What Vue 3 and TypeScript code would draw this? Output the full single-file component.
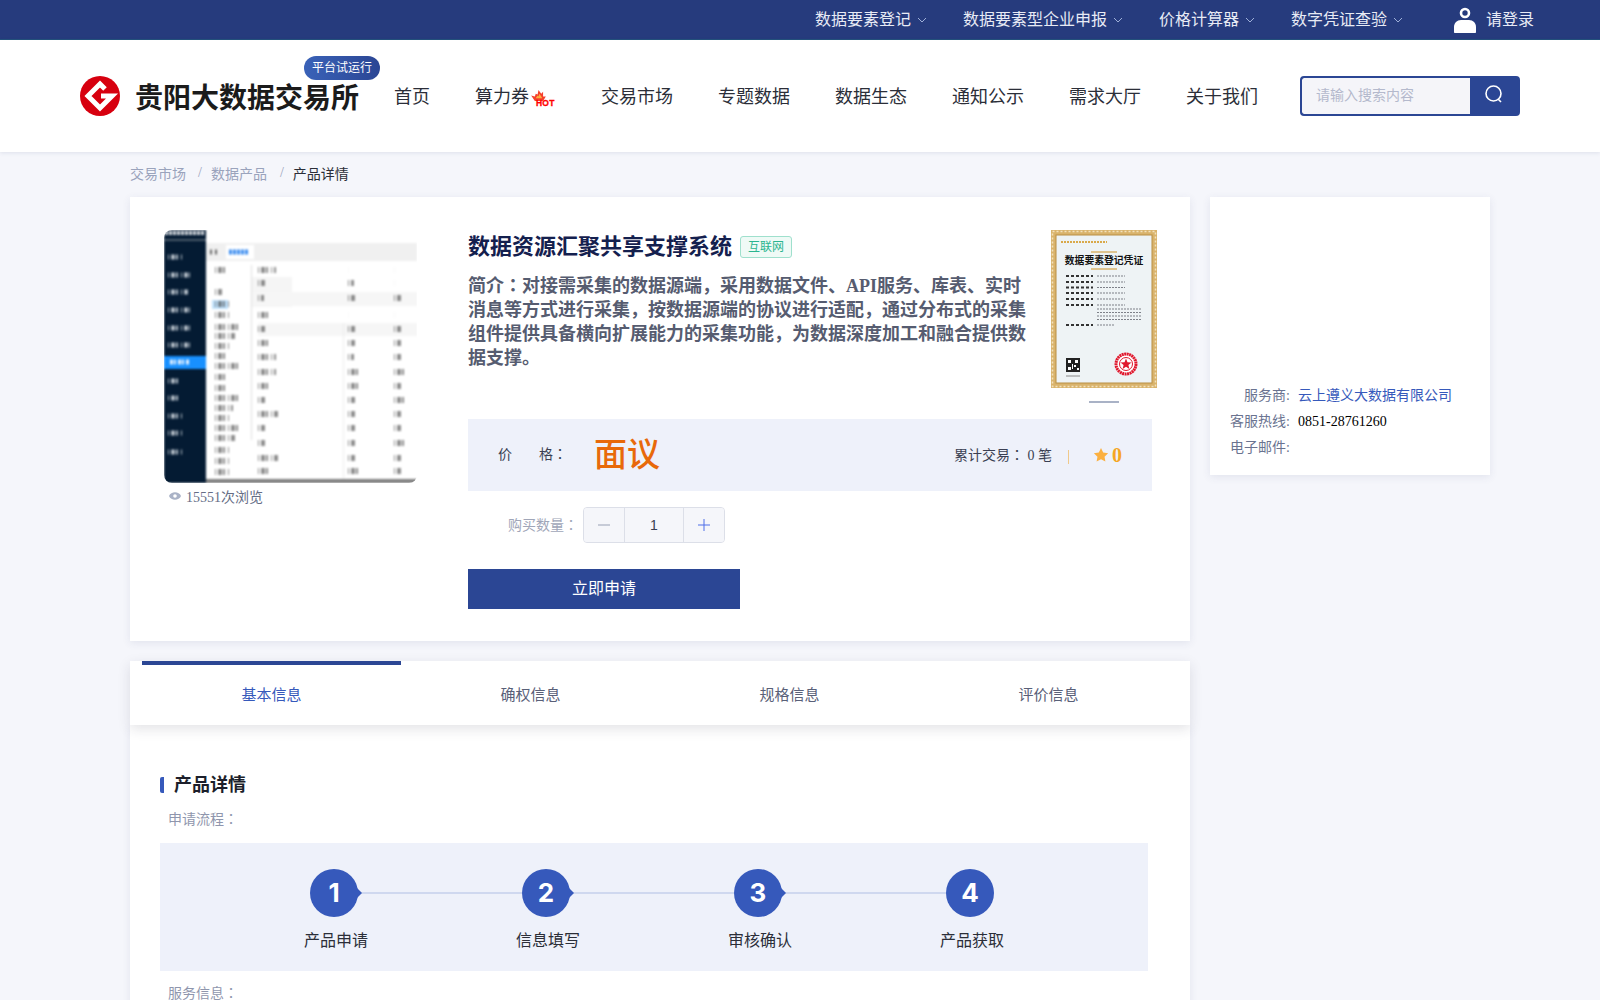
<script setup lang="ts">
import { ref } from 'vue';

const topLinks = ['数据要素登记', '数据要素型企业申报', '价格计算器', '数字凭证查验'];
const navItems = ['首页', '算力券', '交易市场', '专题数据', '数据生态', '通知公示', '需求大厅', '关于我们'];
const tabs = ['基本信息', '确权信息', '规格信息', '评价信息'];
const steps = ['产品申请', '信息填写', '审核确认', '产品获取'];

const activeTab = ref(0);
const amount = ref(1);

const sideRows = [
  { label: '服务商:', value: '云上遵义大数据有限公司', link: true },
  { label: '客服热线:', value: '0851-28761260', link: false },
  { label: '电子邮件:', value: '', link: false }
];

// blurred thumbnail: rows are [y, width], drawn as dashed strokes so they read like tiny text
const menuRows = [[27, 14], [45, 22], [62, 20], [80, 22], [98, 22], [115, 22], [151, 10], [168, 12], [186, 14], [203, 14], [222, 14]];
const treeRows = [[40, 12], [62, 8], [74, 14], [85, 14], [97, 24], [106, 20], [116, 14], [126, 10], [136, 24], [147, 10], [158, 10], [168, 26], [178, 18], [188, 16], [198, 26], [208, 20], [220, 14], [231, 14], [242, 14]];
const tableRows = [[40, 18, 0, 0], [53, 8, 6, 0], [68, 6, 8, 8], [85, 10, 0, 0], [99, 8, 8, 8], [113, 12, 8, 8], [127, 18, 6, 8], [142, 18, 10, 10], [156, 10, 12, 8], [170, 8, 8, 10], [184, 20, 8, 8], [198, 8, 8, 8], [213, 8, 8, 10], [228, 20, 8, 8], [241, 12, 10, 8]];
const certRows = [46, 52, 57.5, 63, 69, 75];
const certText = [79, 82.5, 86, 89.5];
</script>

<template>
  <div class="page">
    <div class="topbar">
      <a v-for="link in topLinks" :key="link" class="top-link">
        {{ link }}
        <svg class="chev" width="10" height="6" viewBox="0 0 10 6"><path d="M1 1l4 4 4-4" fill="none" stroke="#9fb0d8" stroke-width="1" /></svg>
      </a>
      <a class="login">
        <svg width="24" height="26" viewBox="0 0 24 26">
          <circle cx="12" cy="6" r="4" fill="none" stroke="#fff" stroke-width="2.6" />
          <path d="M1 25v-5c0-4 3-7 7-7h8c4 0 7 3 7 7v5c0 .6-.4 1-1 1H2c-.6 0-1-.4-1-1z" fill="#fff" />
        </svg>
        <span>请登录</span>
      </a>
    </div>

    <header class="header">
      <div class="brand">
        <svg class="logo" width="40" height="40" viewBox="0 0 40 40">
          <circle cx="20" cy="20" r="20" fill="#d7000f" />
          <path d="M25 13L20 8 8 20l12 12 12-12H21" fill="none" stroke="#fff" stroke-width="5" />
        </svg>
        <span class="brand-name">贵阳大数据交易所</span>
        <span class="trial">平台试运行</span>
      </div>
      <nav class="nav">
        <a v-for="item in navItems" :key="item" class="nav-item">
          {{ item }}
          <span v-if="item === '算力券'" class="hot">
            <svg width="15" height="11" viewBox="0 0 16 12">
              <path d="M0 6l4 1 1-3 2 1 1-5 3 4 2-2 0 5 3 0-3 5H4z" fill="#f5402c" />
              <path d="M5 9l2-3 1 1 1-3 2 3 1 2z" fill="#fbb040" />
            </svg>
            <b>HOT</b>
          </span>
        </a>
      </nav>
      <div class="search">
        <input class="search-input" placeholder="请输入搜索内容" />
        <button class="search-btn" aria-label="搜索">
          <svg width="20" height="20" viewBox="0 0 20 20"><circle cx="9.5" cy="9.5" r="7.5" fill="none" stroke="#fff" stroke-width="1.6" /><path d="M14 15l3 3" stroke="#fff" stroke-width="1.6" /></svg>
        </button>
      </div>
    </header>

    <div class="crumbs">
      <span>交易市场</span><i>/</i><span>数据产品</span><i>/</i><span class="current">产品详情</span>
    </div>

    <div class="content">
      <div class="left-col">
        <section class="card product">
          <div class="gallery">
            <div class="thumb">
              <svg width="253" height="253" viewBox="0 0 253 253" class="thumb-art">
                <rect width="253" height="253" fill="#fff" />
                <rect width="42" height="253" fill="#041b33" />
                <rect y="126" width="42" height="13" fill="#1890ff" />
                <rect y="9" width="42" height="2" fill="#4a5a6a" />
                <line x1="1" y1="3" x2="40" y2="3" stroke="#d8dce2" stroke-width="4" stroke-dasharray="3 1" />
                <line x1="6" y1="132" x2="26" y2="132" stroke="#e8f3ff" stroke-width="5" stroke-dasharray="3 1 2 2" />
                <rect x="42" y="13" width="211" height="18" fill="#f0f0f0" />
                <rect x="62" y="15" width="28" height="14" fill="#fff" />
                <line x1="65" y1="22" x2="84" y2="22" stroke="#3a8cf0" stroke-width="5" stroke-dasharray="3 1" />
                <line x1="46" y1="22" x2="56" y2="22" stroke="#666" stroke-width="5" stroke-dasharray="2 3" />
                <rect x="48" y="70" width="16" height="9" fill="#bfe0fb" />
                <rect x="88" y="47" width="40" height="30" fill="#f5f5f5" />
                <rect x="88" y="62" width="165" height="14" fill="#f6f6f6" />
                <rect x="94" y="93" width="159" height="13" fill="#f6f6f6" />
                <rect x="87" y="35" width="1" height="175" fill="#dfdfdf" />
                <rect x="179" y="93" width="1" height="160" fill="#ececec" />
                <rect x="42" y="249" width="211" height="4" fill="#7f7f7f" />
                <g stroke="#cfd6de" stroke-width="5" stroke-dasharray="1 2 4 1 2 3" opacity=".85">
                  <line v-for="r in menuRows" :key="r[0]" x1="4" :y1="r[0]" :x2="4 + r[1]" :y2="r[0]" />
                </g>
                <g stroke="#444" stroke-width="6" stroke-dasharray="1 2 4 1 2 3" opacity=".6">
                  <line v-for="r in treeRows" :key="r[0]" x1="51" :y1="r[0]" :x2="51 + r[1]" :y2="r[0]" />
                  <template v-for="r in tableRows" :key="r[0]">
                    <line x1="94" :y1="r[0]" :x2="94 + r[1]" :y2="r[0]" />
                    <line x1="184" :y1="r[0]" :x2="184 + r[2]" :y2="r[0]" />
                    <line x1="230" :y1="r[0]" :x2="230 + r[3]" :y2="r[0]" />
                  </template>
                </g>
              </svg>
            </div>
            <div class="views">
              <svg width="12" height="8" viewBox="0 0 12 8"><path d="M0 4c2-5 10-5 12 0-2 5-10 5-12 0z" fill="#a9b2c6" /><circle cx="6" cy="4" r="1.8" fill="#fff" /></svg>
              <span>15551次浏览</span>
            </div>
          </div>

          <div class="info">
            <div class="info-top">
              <div class="info-text">
                <div class="title-row">
                  <h1>数据资源汇聚共享支撑系统</h1>
                  <span class="tag">互联网</span>
                </div>
                <p class="intro">简介<span class="colon">：</span>对接需采集的数据源端，采用数据文件、API服务、库表、实时消息等方式进行采集，按数据源端的协议进行适配，通过分布式的采集组件提供具备横向扩展能力的采集功能，为数据深度加工和融合提供数据支撑。</p>
              </div>
              <div class="cert-wrap">
                <svg class="cert" width="106" height="158" viewBox="0 0 106 158">
                  <rect width="106" height="158" fill="#d9b36c" />
                  <rect x="1.5" y="1.5" width="103" height="155" fill="none" stroke="#f3e2bd" stroke-width="1.5" stroke-dasharray="2 2" />
                  <rect x="5" y="5" width="96" height="148" fill="#eef3f5" stroke="#b98f45" stroke-width="1" />
                  <line x1="10" y1="12" x2="56" y2="12" stroke="#d9a94a" stroke-width="2" stroke-dasharray="2 1" />
                  <line x1="40" y1="22" x2="66" y2="22" stroke="#d9b36c" stroke-width="1.5" />
                  <text x="53" y="34" class="cert-title" text-anchor="middle">数据要素登记凭证</text>
                  <line x1="40" y1="39" x2="66" y2="39" stroke="#d9b36c" stroke-width="1.5" />
                  <g stroke="#333" stroke-width="2" stroke-dasharray="3 2">
                    <line v-for="y in certRows" :key="y" x1="15" :y1="y" x2="42" :y2="y" />
                    <line x1="15" y1="95" x2="42" y2="95" />
                  </g>
                  <g stroke="#7d8088" stroke-width="1.2" stroke-dasharray="2 1">
                    <line v-for="y in certRows" :key="'v' + y" x1="46" :y1="y" x2="74" :y2="y" />
                    <line v-for="y in certText" :key="'t' + y" x1="46" :y1="y" x2="90" :y2="y" />
                    <line x1="46" y1="95" x2="64" y2="95" />
                  </g>
                  <rect x="15" y="128" width="14" height="14" fill="#222" />
                  <g fill="#fff">
                    <rect x="17" y="130" width="3" height="3" />
                    <rect x="24" y="130" width="3" height="3" />
                    <rect x="17" y="137" width="3" height="3" />
                    <rect x="23" y="135" width="2" height="2" />
                    <rect x="26" y="138" width="2" height="2" />
                    <rect x="21" y="134" width="1" height="5" />
                  </g>
                  <line x1="15" y1="146" x2="29" y2="146" stroke="#888" stroke-width="1" />
                  <circle cx="75" cy="134" r="10" fill="#fff" stroke="#e0182d" stroke-width="3" stroke-dasharray="2 .5" />
                  <circle cx="75" cy="134" r="6.5" fill="none" stroke="#e0182d" stroke-width="1" />
                  <path d="M75 128.5l1.500 3.800 4 .2-3.100 2.500 1 3.900-3.400-2.200-3.400 2.200 1-3.900-3.100-2.500 4-.2z" fill="#e0182d" />
                </svg>
                <div class="cert-dash"></div>
              </div>
            </div>

            <div class="price-band">
              <span class="price-label"><span>价</span><span>格<span class="colon">：</span></span></span>
              <span class="price">面议</span>
              <span class="deals">累计交易<span class="colon">：</span> 0 笔</span>
              <span class="divider"></span>
              <svg width="16" height="16" viewBox="0 0 24 24"><path d="M12 1.5l3.300 6.800 7.400 1-5.400 5.200 1.300 7.400L12 18.400l-6.600 3.500 1.300-7.400L1.300 9.300l7.400-1z" fill="#fbb040" /></svg>
              <span class="score">0</span>
            </div>

            <div class="qty-row">
              <span class="qty-label">购买数量<span class="colon">：</span></span>
              <div class="stepper">
                <button class="step minus" aria-label="减少">
                  <svg width="12" height="12" viewBox="0 0 12 12"><path d="M0 6h12" stroke="#98a0b4" stroke-width="1" /></svg>
                </button>
                <span class="qty">{{ amount }}</span>
                <button class="step plus" aria-label="增加" @click="amount++">
                  <svg width="12" height="12" viewBox="0 0 12 12"><path d="M0 6h12M6 0v12" stroke="#4f6fe8" stroke-width="1" /></svg>
                </button>
              </div>
            </div>

            <button class="apply">立即申请</button>
          </div>
        </section>

        <div class="tabs">
          <div
            v-for="(tab, i) in tabs"
            :key="tab"
            class="tab"
            :class="{ active: activeTab === i }"
            @click="activeTab = i"
          >{{ tab }}</div>
        </div>

        <section class="card detail">
          <h2>产品详情</h2>
          <div class="sub-label">申请流程<span class="colon">：</span></div>
          <div class="flow">
            <div v-for="(step, i) in steps" :key="step" class="flow-step">
              <div class="flow-circle">{{ i + 1 }}</div>
              <div class="flow-name">{{ step }}</div>
            </div>
          </div>
          <div class="sub-label service">服务信息<span class="colon">：</span></div>
        </section>
      </div>

      <aside class="side card">
        <div v-for="row in sideRows" :key="row.label" class="side-row">
          <span class="side-label">{{ row.label }}</span>
          <span class="side-value" :class="{ link: row.link }">{{ row.value }}</span>
        </div>
      </aside>
    </div>
  </div>
</template>

<style>
html,
body {
  margin: 0;
  background: #f5f6fb;
  overflow: hidden;
}
</style>

<style scoped>
.page {
  height: 1000px;
  overflow: hidden;
  font-family: "Liberation Serif", "Noto Sans CJK SC", serif;
  color: #1c1f2b;
}

/* the reference sets its colons in the middle of the em box */
.colon {
  font-family: "Noto Sans CJK TC", sans-serif;
  line-height: 0;
}

.topbar {
  height: 39px;
  background: #263b7d;
  border-bottom: 1px solid #23527c;
  display: flex;
  justify-content: flex-end;
  align-items: center;
  padding-right: 66px;
  font-size: 16px;
  line-height: 20px;
}

.top-link {
  margin-right: 36px;
  color: #e8ebf5;
  display: flex;
  align-items: center;
  gap: 6px;
}

.login {
  display: flex;
  align-items: center;
  gap: 9px;
  margin-left: 14px;
  color: #e8ebf5;
}

.header {
  height: 112px;
  background: #fff;
  box-shadow: 0 1px 4px rgba(60, 70, 120, 0.12);
  display: flex;
  align-items: center;
  padding-left: 80px;
  position: relative;
}

.brand {
  display: flex;
  align-items: center;
  position: relative;
  width: 314px;
}

.brand-name {
  font-size: 28px;
  font-weight: 700;
  margin-left: 15px;
  white-space: nowrap;
  color: #1b1b1b;
}

.trial {
  position: absolute;
  left: 224px;
  top: -20px;
  height: 24px;
  line-height: 24px;
  padding: 0 8px;
  border-radius: 12px;
  background: linear-gradient(90deg, #3a62b8, #2b4694);
  color: #fff;
  font-size: 12px;
  white-space: nowrap;
}

.nav {
  display: flex;
  gap: 45px;
  font-size: 18px;
  line-height: 24px;
  color: #2b2e38;
  padding-top: 2px;
}

.nav-item {
  position: relative;
  white-space: nowrap;
}

.nav-item:nth-child(2) {
  padding-right: 27px;
}

.hot {
  position: absolute;
  left: 56px;
  top: 5px;
  width: 25px;
  height: 18px;
}

.hot svg {
  position: absolute;
  left: 0;
  top: 0;
}

.hot b {
  position: absolute;
  left: 5px;
  top: 8px;
  font: 700 8.5px/10px "Liberation Sans", sans-serif;
  color: #f00;
  letter-spacing: 0.2px;
  -webkit-text-stroke: 0.3px #f00;
}

.search {
  display: flex;
  width: 220px;
  height: 40px;
  margin-left: 42px;
  border-radius: 4px;
  background: #2b4694;
  border: 2px solid #2b4694;
  box-sizing: border-box;
  overflow: hidden;
}

.search-input {
  width: 168px;
  box-sizing: border-box;
  border: none;
  outline: none;
  background: #f5f5f9;
  padding: 0 14px;
  font: 14px "Liberation Serif", "Noto Sans CJK SC", serif;
  border-radius: 2px 0 0 2px;
}

.search-input::placeholder {
  color: #b4b9cc;
}

.search-btn {
  flex: 1;
  border: none;
  background: #2b4694;
  padding: 0 0 4px;
  display: flex;
  align-items: center;
  justify-content: center;
}

.crumbs {
  margin-left: 130px;
  height: 41px;
  padding-bottom: 4px;
  display: flex;
  align-items: center;
  font-size: 14px;
  color: #9aa3bc;
}

.crumbs i {
  font-style: normal;
  margin: 0 9px 0 12px;
}

.crumbs i:nth-of-type(2) {
  margin-left: 13px;
}

.current {
  color: #2b2e38;
}

.content {
  display: flex;
  align-items: flex-start;
  gap: 20px;
  margin-left: 130px;
}

.left-col {
  width: 1060px;
}

.card {
  background: #fff;
  box-shadow: 0 2px 8px rgba(60, 70, 120, 0.1);
}

.product {
  height: 444px;
  box-sizing: border-box;
  padding: 33px 34px 0;
  display: flex;
}

.gallery {
  width: 253px;
  margin-right: 51px;
  flex-shrink: 0;
}

.thumb {
  width: 253px;
  height: 253px;
  border-radius: 8px;
  overflow: hidden;
}

.thumb-art {
  display: block;
  filter: blur(1.1px);
}

.views {
  display: flex;
  align-items: center;
  gap: 5px;
  margin: 3px 0 0 5px;
  font-size: 14px;
  color: #656d85;
}

.info {
  flex: 1;
}

.info-top {
  display: flex;
  height: 189px;
}

.info-text {
  width: 560px;
}

.title-row {
  display: flex;
  align-items: center;
  gap: 8px;
  height: 34px;
}

h1 {
  margin: 0;
  font-size: 22px;
  line-height: 30px;
  font-weight: 700;
  color: #14204e;
}

.tag {
  height: 20px;
  line-height: 20px;
  padding: 0 7px;
  font-size: 12px;
  color: #2bb58f;
  background: #effaf6;
  border: 1px solid #9fe0cd;
  border-radius: 3px;
}

.intro {
  margin: 10px 0 0;
  font-size: 18px;
  line-height: 24px;
  font-weight: 700;
  color: #565c70;
}

.cert-wrap {
  margin-left: 23px;
  width: 106px;
}

.cert {
  display: block;
}

.cert-title {
  font-size: 9.8px;
  font-weight: 700;
  fill: #111;
}

.cert-dash {
  width: 30px;
  height: 2px;
  background: #a9b2c6;
  margin: 13px auto 0;
}

.price-band {
  width: 684px;
  height: 72px;
  background: #eef1fa;
  display: flex;
  align-items: center;
  font-size: 14px;
  line-height: 20px;
  color: #3a3f52;
}

.price-label {
  width: 69px;
  margin-left: 30px;
  display: flex;
  justify-content: space-between;
}

.price {
  font-size: 33px;
  line-height: 44px;
  font-weight: 500;
  color: #e8690a;
  margin: 0 auto 0 27px;
}

.deals {
  margin-top: 2px;
}

.divider {
  width: 1px;
  height: 14px;
  background: #f0c98a;
  margin: 4px 24px 0 16px;
}

.score {
  font-size: 20px;
  font-weight: 700;
  color: #f5a623;
  margin: 0 30px 0 3px;
}

.qty-row {
  display: flex;
  align-items: center;
  margin-top: 16px;
  padding-left: 40px;
}

.qty-label {
  font-size: 14px;
  line-height: 20px;
  color: #a0a6b8;
  width: 75px;
  white-space: nowrap;
  margin-top: 2px;
}

.stepper {
  display: flex;
  width: 142px;
  height: 36px;
  box-sizing: border-box;
  border: 1px solid #dcdfe8;
  border-radius: 4px;
  overflow: hidden;
  background: #f5f6fa;
}

.step {
  width: 41px;
  border: none;
  background: #f5f6fa;
  padding: 0;
  display: flex;
  align-items: center;
  justify-content: center;
}

.minus {
  border-right: 1px solid #dcdfe8;
}

.plus {
  border-left: 1px solid #dcdfe8;
}

.qty {
  flex: 1;
  text-align: center;
  line-height: 34px;
  font-size: 14px;
  color: #3a3f52;
  font-family: "Liberation Sans", sans-serif;
}

.apply {
  display: block;
  margin-top: 26px;
  width: 272px;
  height: 40px;
  border: none;
  background: #2b4694;
  color: #fff;
  font: 16px/20px "Liberation Serif", "Noto Sans CJK SC", serif;
  padding: 0 0 1px;
}

.tabs {
  margin-top: 20px;
  height: 64px;
  padding: 0 12px;
  background: #fff;
  display: flex;
  position: relative;
  z-index: 1;
  box-shadow: 0 4px 12px rgba(40, 40, 60, 0.13);
}

.tab {
  width: 259px;
  box-sizing: border-box;
  padding-top: 4px;
  text-align: center;
  line-height: 60px;
  font-size: 15px;
  color: #596078;
}

.tab.active {
  color: #3659bb;
  border-top: 4px solid #2b4694;
  padding-top: 0;
}

.detail {
  height: 310px;
  padding: 52px 30px 0;
  box-sizing: border-box;
}

h2 {
  margin: 0;
  height: 16px;
  line-height: 16px;
  font-size: 18px;
  font-weight: 700;
  color: #1c1f2b;
  padding-left: 10px;
  border-left: 4px solid #3659bb;
  border-radius: 2px;
}

.sub-label {
  margin: 17px 0 0 8px;
  height: 20px;
  line-height: 20px;
  font-size: 14px;
  color: #8f96ad;
}

.flow {
  width: 988px;
  height: 128px;
  margin-top: 13px;
  background: #eef1fa;
  display: flex;
  padding-left: 120px;
  box-sizing: border-box;
}

.flow-step {
  width: 212px;
  flex-shrink: 0;
  position: relative;
  padding-top: 26px;
}

.flow-step:not(:last-child)::after {
  content: "";
  position: absolute;
  left: 78px;
  top: 49px;
  height: 2px;
  background: #cfd8ef;
  width: 164px;
}

.flow-circle {
  width: 48px;
  height: 48px;
  margin-left: 30px;
  border-radius: 50%;
  background: #3659bb;
  color: #fff;
  font: 700 26px/48px Inter, "Liberation Sans", sans-serif;
  text-align: center;
  position: relative;
  z-index: 1;
}

.flow-step:not(:last-child) .flow-circle::after {
  content: "";
  position: absolute;
  right: -4px;
  top: 19px;
  border-left: 5px solid #3659bb;
  border-top: 5px solid transparent;
  border-bottom: 5px solid transparent;
}

.flow-name {
  margin-top: 13px;
  width: 112px;
  text-align: center;
  font-size: 16px;
  line-height: 22px;
  color: #2b2e38;
}

.service {
  margin-top: 13px;
}

.side {
  width: 280px;
  height: 278px;
  box-sizing: border-box;
  padding-top: 188px;
}

.side-row {
  display: flex;
  height: 26px;
  font-size: 14px;
  line-height: 22px;
}

.side-label {
  width: 80px;
  text-align: right;
  color: #6a7390;
  flex-shrink: 0;
}

.side-value {
  margin-left: 8px;
  color: #000;
}

.side-value.link {
  color: #3659bb;
}
</style>
